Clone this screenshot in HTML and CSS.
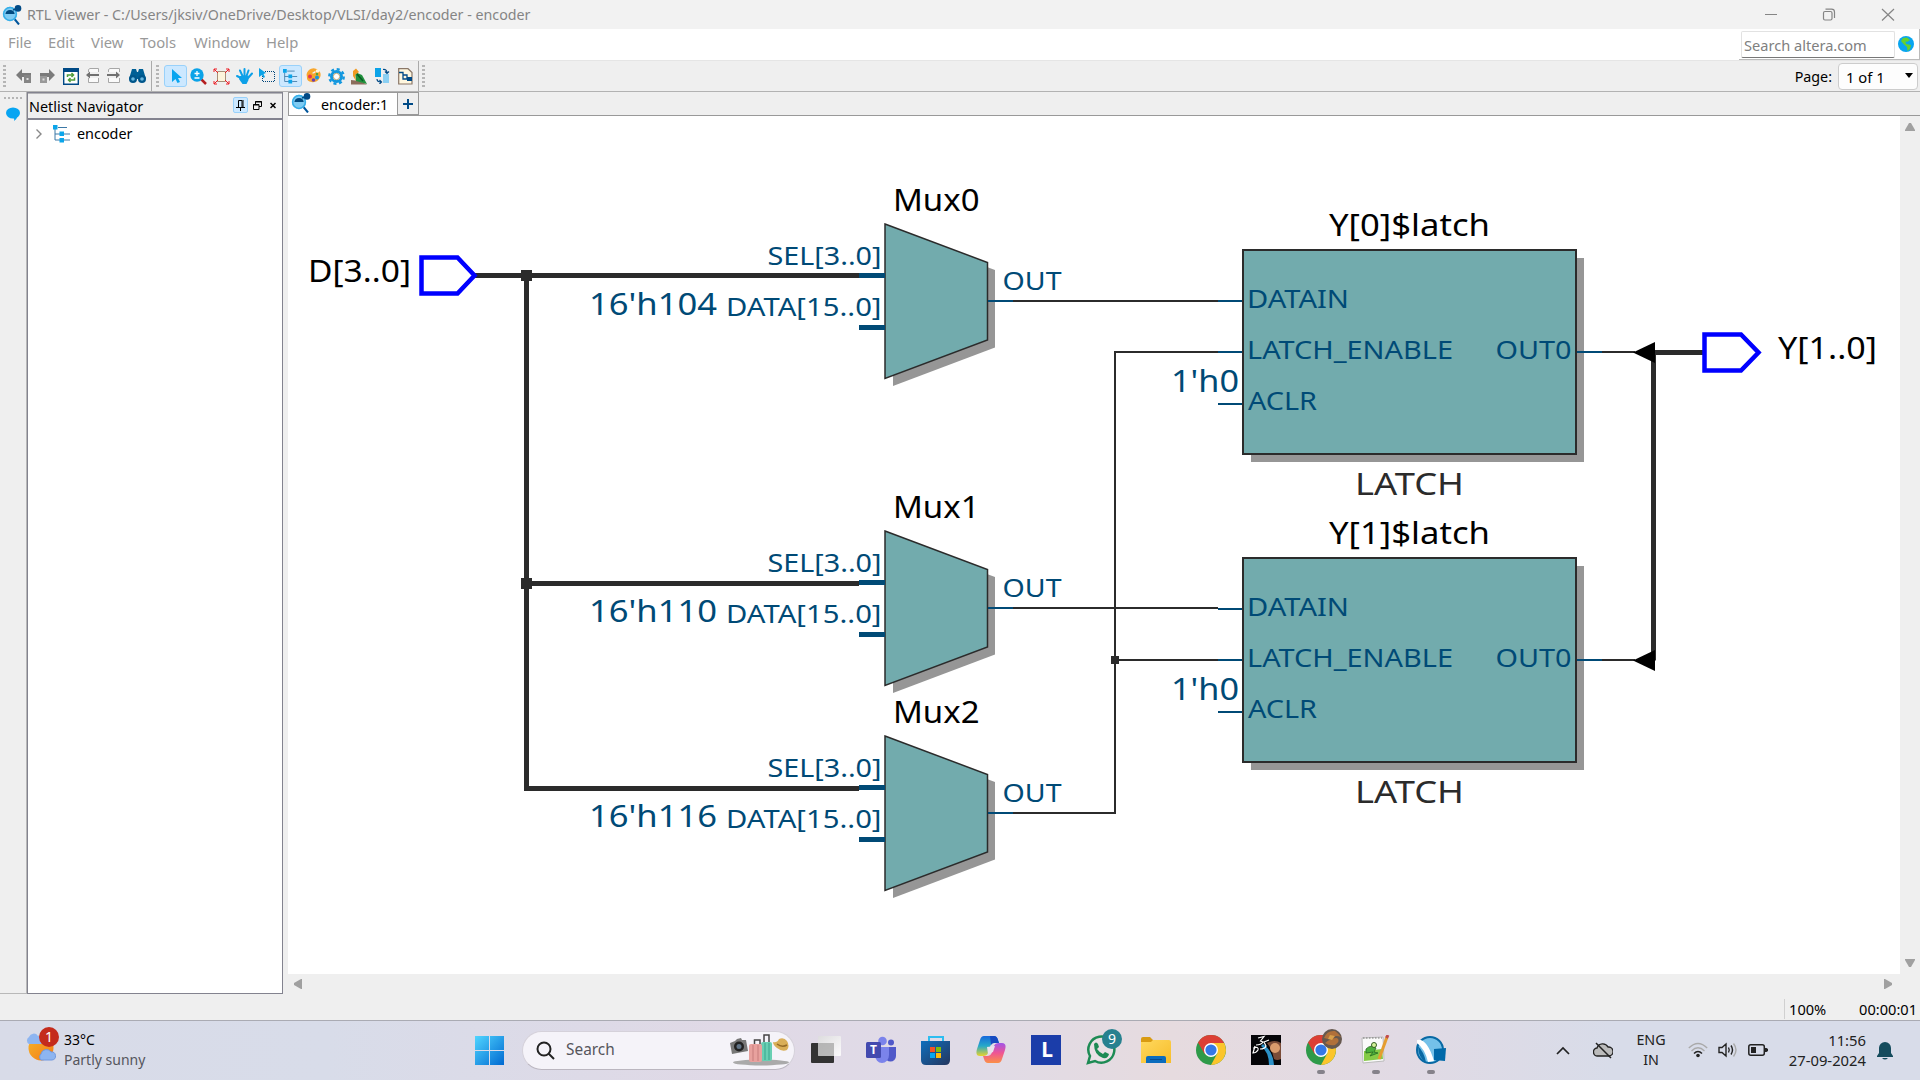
FILE: index.html
```
<!DOCTYPE html>
<html lang="en">
<head>
<meta charset="utf-8">
<title>RTL Viewer</title>
<link rel="stylesheet" href="styles.css">
</head>
<body>
<svg class="defs" width="0" height="0" aria-hidden="true">
  <defs>
    <symbol id="lens" viewBox="0 0 20 20">
      <path d="M12.500 14L17 19.500" stroke="#00559b" stroke-width="2"/>
      <circle cx="8" cy="9" r="7.200" fill="#7ecbf3"/><circle cx="8" cy="9" r="6.400" fill="none" stroke="#35aee8" stroke-width="1.500"/>
      <path d="M3.400 9A4.700 4.700 0 0 1 12.700 9Z" fill="#004a80"/>
      <path d="M11 5L16 3" stroke="#004a80" stroke-width="1.500"/><circle cx="16" cy="3.400" r="3.300" fill="#004a86"/>
    </symbol>
    <symbol id="tree" viewBox="0 0 18 18">
      <path d="M2 4V15H9M2 9H7M5 2.500H14M11 9H17M11 15H17" fill="none" stroke="#3c78a6" stroke-width="1"/>
      <path d="M0 0h4.500v4.500H0zM6.500 6.500H11V11H6.500zM6.500 13H11v4.500H6.500z" fill="#0ba5ea"/>
    </symbol>
    <symbol id="chrome" viewBox="0 0 30 30">
      <circle cx="15" cy="15" r="15" fill="#2e9a49"/>
      <path d="M15 15L2 7.500A15 15 0 0 1 28 7.500Z" fill="#dc3f35"/>
      <path d="M15 8H28.200A15 15 0 0 1 15 30L21.500 18Z" fill="#fbc52b"/>
      <path d="M2 7.500L8.500 18.700 15 15V7.500Z" fill="#dc3f35"/>
      <circle cx="15" cy="15" r="7" fill="#fff"/><circle cx="15" cy="15" r="5.600" fill="#3478e6"/>
    </symbol>
    <g id="mux">
      <path d="M893 232L995 270V347.500L893 386Z" fill="#969696"/>
      <path d="M885 224L987.500 262.500V340L885 378.500Z" fill="#72abad" stroke="#2b2b2b" stroke-width="1.500"/>
      <path d="M859 275.500H885M859 327.500H885" stroke="#004a76" stroke-width="5"/>
      <path d="M988 301H1013" stroke="#004a76" stroke-width="2"/>
    </g>
    <g id="latch">
      <path d="M1251 258H1584V462H1251Z" fill="#969696"/>
      <path d="M1243 250H1576V454H1243Z" fill="#72abad" stroke="#2b2b2b" stroke-width="2"/>
      <path d="M1218 301H1242M1218 352H1242M1218 404H1242M1577 352H1602" stroke="#004a76" stroke-width="2"/>
      <path d="M1602 352H1635" stroke="#2b2b2b" stroke-width="2"/>
      <path d="M1633 352.500L1655 342V363Z" fill="#000"/>
    </g>
    <linearGradient id="win" x2="1" y2="1"><stop stop-color="#50d5ff"/><stop offset="1" stop-color="#0069d1"/></linearGradient>
    <linearGradient id="sun" x2="1" y2="1"><stop stop-color="#f5b52a"/><stop offset="1" stop-color="#f47a16"/></linearGradient>
    <linearGradient id="store" x2="1" y2="1"><stop stop-color="#0f6fbd"/><stop offset="1" stop-color="#24365e"/></linearGradient>
    <linearGradient id="coA" x2="0" y2="1"><stop stop-color="#1769dc"/><stop offset=".5" stop-color="#27a9c9"/><stop offset="1" stop-color="#e9d32b"/></linearGradient>
    <linearGradient id="coB" x2="0" y2="1"><stop stop-color="#a055e8"/><stop offset=".5" stop-color="#ef5594"/><stop offset="1" stop-color="#fb9047"/></linearGradient>
    <linearGradient id="folder" x2="1" y2="1"><stop stop-color="#ffd85e"/><stop offset="1" stop-color="#f7bd2a"/></linearGradient>
    <linearGradient id="glass" x2="1" y2="1"><stop stop-color="#ddd"/><stop offset="1" stop-color="#fff"/></linearGradient>
  </defs>
</svg>

<div class="window">
  <header class="titlebar">
    <svg class="app-icon" width="20" height="20"><use href="#lens"/></svg>
    <span class="title">RTL Viewer - C:/Users/jksiv/OneDrive/Desktop/VLSI/day2/encoder - encoder</span>
    <svg class="win-controls" width="132" height="20" viewBox="0 0 132 20" fill="none" stroke="#858585" stroke-width="1.200">
      <path d="M1 9.500H13M118 4L130 15.500M130 4L118 15.500"/><rect x="59.500" y="6.500" width="8.500" height="8.500" rx="1.500"/><path d="M61.500 4.200H67.500Q70.500 4.200 70.500 7V13"/>
    </svg>
  </header>

  <nav class="menubar">
    <span class="m-file">File</span><span class="m-edit">Edit</span><span class="m-view">View</span><span class="m-tools">Tools</span><span class="m-window">Window</span><span class="m-help">Help</span>
    <div class="web-search">
      <div class="search-field">Search altera.com</div>
      <svg width="16" height="16" viewBox="0 0 16 16"><circle cx="8" cy="8" r="8" fill="#08a5ef"/><path d="M5 2L9 1.500 12 4 9 6 7.500 5 8 8 13 9 12 13 9.500 15 9 11 6 8.500 3 5Z" fill="#65d02e"/></svg>
    </div>
  </nav>

  <div class="toolbar">
    <div class="group nav-tools">
      <i class="grip"></i>
      <svg width="16" height="16" viewBox="0 0 16 16"><path d="M0 7L6 1V5H15V9H6V13Z" fill="#7b7b7b"/><path d="M8 7h7v8H8z" fill="#858585"/><path d="M10.500 10h2v2h-2z" fill="#ddd"/></svg>
      <svg width="16" height="16" viewBox="0 0 16 16"><path d="M15 7L9 1V5H0V9H9V13Z" fill="#7b7b7b"/><path d="M0 8h7v7H0z" fill="#999"/><path d="M2.500 10.500h2v2h-2z" fill="#ddd"/></svg>
      <svg width="16" height="17" viewBox="0 0 16 17"><path d="M.7.700H15.300V16.300H.7Z" fill="#fff" stroke="#004a86" stroke-width="1.400"/><path d="M0 0H16V4H0Z" fill="#004a86"/><path d="M4.500 9V7H10M8.500 5L10.500 7 8.500 9M11.500 9.500V12H6M7.500 10L5.500 12 7.500 14" fill="none" stroke="#4e9d3a" stroke-width="1.500"/></svg>
      <svg width="14" height="16" viewBox="0 0 14 16"><path d="M2.500 4V1.500L4 .500H12.500V4M2.500 10V14.500H12.500V10" fill="#fafafa" stroke="#a7a7a7"/><path d="M0 7L4 3.500V6H13V8H4V10.500Z" fill="#707070"/></svg>
      <svg width="14" height="16" viewBox="0 0 14 16"><path d="M1.500 4V1.500L3 .500H12.500V4M1.500 10V14.500H12.500V10" fill="#fafafa" stroke="#a7a7a7"/><path d="M13 7L9 3.500V6H0V8H9V10.500Z" fill="#707070"/></svg>
      <svg width="17" height="16" viewBox="0 0 17 16"><path d="M3 1H7L8 4H9L10 1H14L17 11H0Z" fill="#006096"/><circle cx="4" cy="11" r="4" fill="#00568b"/><circle cx="13" cy="11" r="4" fill="#00568b"/><circle cx="4" cy="11" r="1.800" fill="#69b7df"/><circle cx="13" cy="11" r="1.800" fill="#69b7df"/></svg>
    </div>
    <div class="group view-tools">
      <i class="grip"></i>
      <span class="tool on"><svg width="16" height="16" viewBox="0 0 16 16"><path d="M4 1L14 10H10L12 14 9.500 15 7.500 11 4 14Z" fill="#08a5ef"/></svg></span>
      <span class="tool"><svg width="17" height="17" viewBox="0 0 17 17"><path d="M11 11L16 16" stroke="#b51f20" stroke-width="2.500"/><circle cx="7" cy="7" r="6.700" fill="#0ba3e8"/><path d="M4.500 5.500H9.500M7 3V8M4.500 10H9.500" stroke="#fff" stroke-width="1.300"/></svg></span>
      <span class="tool"><svg width="17" height="17" viewBox="0 0 17 17"><path d="M4.500 3.500H12.500V13.500H4.500Z" fill="#fdf5dc" stroke="#a88f78"/><path d="M5 5L1 1M1 4V1H4M12 5L16 1M13 1H16V4M5 12L1 16M1 13V16H4M12 12L16 16M13 16H16V13" fill="none" stroke="#ec1c24"/></svg></span>
      <span class="tool"><svg width="17" height="17" viewBox="0 0 17 17"><path d="M1 8L5 10M4 2.500L6.500 8M8.500 1V8M12.500 2.500L10.500 8M16 5.500L12 10" stroke="#0ca0e8" stroke-width="2" stroke-linecap="round"/><path d="M4 8L12.500 7.500V12L10.500 16H6.500L3 11Z" fill="#0ca0e8"/></svg></span>
      <span class="tool"><svg width="17" height="16" viewBox="0 0 17 16"><path d="M6 3.500H15.500V13.500H3.500V8" fill="none" stroke="#00457a" stroke-dasharray="1 1"/><path d="M0 0L7 5 4.500 6 6 9 4.500 10 3 7 0 9Z" fill="#0ba3e8"/></svg></span>
      <span class="tool on"><svg width="15" height="15"><use href="#tree"/></svg></span>
      <span class="tool"><svg width="16" height="16" viewBox="0 0 16 16"><path d="M1 9A7 6.500 0 1 1 13 11C10 16 0 15 1 9ZM6 5A2 1.500 0 0 0 9 3Z" fill="#f8a62c"/><circle cx="11.500" cy="3" r="1.800" fill="#fff4dc"/><circle cx="4" cy="8.500" r="2" fill="#e8344e"/><circle cx="7.500" cy="12" r="1.800" fill="#6b3fb4"/><circle cx="11" cy="9.500" r="2" fill="#1598df"/><circle cx="11" cy="6" r="1.200" fill="#57a43a"/></svg></span>
      <span class="tool"><svg width="17" height="17" viewBox="0 0 17 17"><circle cx="8.500" cy="8.500" r="7.300" fill="none" stroke="#1398df" stroke-width="2.300" stroke-dasharray="3 2.730"/><circle cx="8.500" cy="8.500" r="5" fill="#fff" stroke="#1398df" stroke-width="3"/><circle cx="8.500" cy="8.500" r="3.200" fill="none" stroke="#bba778"/></svg></span>
      <span class="tool"><svg width="17" height="17" viewBox="0 0 17 17"><path d="M0 12L9 13 16 16.500H0Z" fill="#8b6d5b"/><path d="M4 4L11 7 16 16 5 13Z" fill="#20913c"/><path d="M2 3L5 .500 8 4 4 7 5 13 2 8Z" fill="#f09a23"/><path d="M6 6L12 13" stroke="#075d27" stroke-width="1.500"/></svg></span>
      <span class="tool"><svg width="15" height="16" viewBox="0 0 15 16"><path d="M0 0h6v9H0z" fill="#0ba3e8"/><path d="M8 6h6v9H8z" fill="#8bd0f3"/><path d="M8 1.500Q12 1 12 5M10 3.500L12 5.500 14 3.500M2 11Q2 14 6 14M4.500 12L6.500 14 4.500 16" fill="none" stroke="#004a86" stroke-width="1.200"/></svg></span>
      <span class="tool"><svg width="15" height="17" viewBox="0 0 15 17"><path d="M.7.700H10L14 4.500V16H.7Z" fill="#fff7df" stroke="#8a7768" stroke-width="1.200"/><path d="M1 4.500H5V11H10M5 7H9V11" fill="none" stroke="#004a86" stroke-width="1.300"/><path d="M9 9h5v4H9z" fill="#004a86"/></svg></span>
    </div>
    <div class="group rest"><i class="grip"></i>
      <div class="pager"><span>Page:</span><div class="combo"><span>1 of 1</span><svg width="8" height="5" viewBox="0 0 8 5"><path d="M0 0H8L4 5Z"/></svg></div></div>
    </div>
  </div>

  <main class="workspace">
    <aside class="rail"><i class="rail-grip"></i><svg width="14" height="14" viewBox="0 0 14 14"><ellipse cx="7" cy="6" rx="7" ry="5.500" fill="#08a5f2"/><path d="M7 10L12 8Q11 12 8 14Q9 12 7 10Z" fill="#08a5f2"/></svg></aside>
    <section class="navigator">
      <div class="nav-head"><span>Netlist Navigator</span>
        <i class="pin"><svg width="9" height="11" viewBox="0 0 9 11" fill="none" stroke="#000"><path d="M2.500 7V.500H6V7M7 0V7M0 7.500H9M4.500 8V11"/></svg></i>
        <svg class="float" width="9" height="9" viewBox="0 0 9 9" fill="none" stroke="#000"><path d="M2.500 3V.500H8.500V5.500H6M2 1H9M.500 3.500H6V8.500H.500ZM0 4H6"/></svg>
        <svg class="close" width="6" height="7" viewBox="0 0 6 7"><path d="M.500 1L5.500 6M5.500 1L.500 6" stroke="#000" stroke-width="1.500"/></svg>
      </div>
      <div class="tree-row"><svg width="6" height="10" viewBox="0 0 6 10"><path d="M.500.500L5 5 .500 9.500" fill="none" stroke="#888" stroke-width="1.400"/></svg><svg class="tree-icon" width="18" height="18"><use href="#tree"/></svg><span>encoder</span></div>
    </section>
    <section class="editor">
      <div class="tabs"><div class="tab"><svg width="20" height="20"><use href="#lens"/></svg><span>encoder:1</span></div><div class="add"><svg width="10" height="10" viewBox="0 0 10 10"><path d="M5 0V10M0 5H10" stroke="#004a86" stroke-width="2"/></svg></div></div>
      <div class="view">
        <svg class="schematic" width="1612" height="858" viewBox="288 116 1612 858">
          <g class="bus"><path d="M475 275.500H859M526.500 273V788.500H859M526.500 583.500H859M1653.500 352.500V660.500M1653 352.500H1703"/></g>
          <g class="wire"><path d="M1013 301H1218M1013 608H1218M1013 813H1115V352H1218M1115 660H1218"/></g>
          <path class="node" d="M521 270h11v11h-11zM521 578h11v11h-11zM1111 656h8v8h-8z"/>
          <path class="port" d="M421.500 257.500H457.500L474.500 275.500 457.500 293.500H421.500Z"/>
          <path class="port" d="M1704.500 334.500H1741L1758.500 352.500 1741 370.500H1704.500Z"/>
          <use href="#mux"/><use href="#mux" y="307"/><use href="#mux" y="512"/>
          <use href="#latch"/><use href="#latch" y="308"/>
          <g class="big">
            <text x="308" y="282" textLength="103" lengthAdjust="spacingAndGlyphs">D[3..0]</text><text x="1778" y="359" textLength="99" lengthAdjust="spacingAndGlyphs">Y[1..0]</text>
            <text x="893" y="210.500" textLength="86.500" lengthAdjust="spacingAndGlyphs">Mux0</text><text x="893" y="517.500" textLength="86.500" lengthAdjust="spacingAndGlyphs">Mux1</text><text x="893" y="722.500" textLength="86.500" lengthAdjust="spacingAndGlyphs">Mux2</text>
            <text x="1329" y="235.500" textLength="161" lengthAdjust="spacingAndGlyphs">Y[0]$latch</text><text x="1329" y="543.500" textLength="161" lengthAdjust="spacingAndGlyphs">Y[1]$latch</text>
          </g>
          <g class="big type"><text x="1355" y="494.500" textLength="109" lengthAdjust="spacingAndGlyphs">LATCH</text><text x="1355" y="802.500" textLength="109" lengthAdjust="spacingAndGlyphs">LATCH</text></g>
          <g class="big const">
            <text x="589" y="315" textLength="128" lengthAdjust="spacingAndGlyphs">16'h104</text><text x="589" y="622" textLength="128" lengthAdjust="spacingAndGlyphs">16'h110</text><text x="589" y="827" textLength="128" lengthAdjust="spacingAndGlyphs">16'h116</text>
            <text x="1171" y="392" textLength="68" lengthAdjust="spacingAndGlyphs">1'h0</text><text x="1171" y="700" textLength="68" lengthAdjust="spacingAndGlyphs">1'h0</text>
          </g>
          <g class="pin-name">
            <text x="767.500" y="265" textLength="114" lengthAdjust="spacingAndGlyphs">SEL[3..0]</text><text x="726" y="316" textLength="155.500" lengthAdjust="spacingAndGlyphs">DATA[15..0]</text><text x="1002.500" y="290" textLength="59" lengthAdjust="spacingAndGlyphs">OUT</text>
            <text x="767.500" y="572" textLength="114" lengthAdjust="spacingAndGlyphs">SEL[3..0]</text><text x="726" y="623" textLength="155.500" lengthAdjust="spacingAndGlyphs">DATA[15..0]</text><text x="1002.500" y="597" textLength="59" lengthAdjust="spacingAndGlyphs">OUT</text>
            <text x="767.500" y="777" textLength="114" lengthAdjust="spacingAndGlyphs">SEL[3..0]</text><text x="726" y="828" textLength="155.500" lengthAdjust="spacingAndGlyphs">DATA[15..0]</text><text x="1002.500" y="802" textLength="59" lengthAdjust="spacingAndGlyphs">OUT</text>
            <text x="1247" y="308" textLength="102" lengthAdjust="spacingAndGlyphs">DATAIN</text><text x="1247" y="359" textLength="206" lengthAdjust="spacingAndGlyphs">LATCH_ENABLE</text><text x="1248" y="410" textLength="69" lengthAdjust="spacingAndGlyphs">ACLR</text><text x="1495.500" y="359" textLength="76" lengthAdjust="spacingAndGlyphs">OUT0</text>
            <text x="1247" y="616" textLength="102" lengthAdjust="spacingAndGlyphs">DATAIN</text><text x="1247" y="667" textLength="206" lengthAdjust="spacingAndGlyphs">LATCH_ENABLE</text><text x="1248" y="718" textLength="69" lengthAdjust="spacingAndGlyphs">ACLR</text><text x="1495.500" y="667" textLength="76" lengthAdjust="spacingAndGlyphs">OUT0</text>
          </g>
        </svg>
        <div class="vscroll"><svg width="10" height="8" viewBox="0 0 10 8"><path d="M4 0H6L10 7V8H0V7Z"/></svg><svg width="10" height="8" viewBox="0 0 10 8"><path d="M4 8H6L10 1V0H0V1Z"/></svg></div>
        <div class="hscroll"><svg width="8" height="10" viewBox="0 0 8 10"><path d="M0 4V6L7 10H8V0H7Z"/></svg><svg width="8" height="10" viewBox="0 0 8 10"><path d="M8 4V6L1 10H0V0H1Z"/></svg></div>
      </div>
    </section>
  </main>
  <footer class="status"><span class="zoom">100%</span><span>00:00:01</span></footer>
</div>

<div class="taskbar">
  <div class="weather">
    <svg width="36" height="40" viewBox="0 0 36 40"><circle cx="16" cy="22" r="12.500" fill="url(#sun)"/><path d="M4 18A4 4 0 0 1 4 11A5 5 0 0 1 13 10A4 4 0 0 1 16 18Z" fill="#8db5f1"/><path d="M16 34A4 4 0 0 1 16 28A5.500 5.500 0 0 1 26 26A4 4 0 0 1 27 34Z" fill="#8db5f1" stroke="#7198df"/><circle cx="24" cy="11" r="10" fill="#c42b1c"/><text class="badge" x="24" y="16">1</text></svg>
    <div><div>33°C</div><div class="sub">Partly sunny</div></div>
  </div>
  <svg class="start" width="29" height="29" viewBox="0 0 29 29" fill="url(#win)"><path d="M0 0H14V14H0ZM15 0H29V14H15ZM0 15H14V29H0ZM15 15H29V29H15Z"/></svg>
  <div class="search">
    <svg width="19" height="19" viewBox="0 0 19 19" fill="none" stroke="#222" stroke-width="2"><circle cx="8" cy="8" r="6.500"/><path d="M12.500 12.500L18 18"/></svg>
    <span>Search</span>
    <svg class="travel" width="60" height="32" viewBox="0 0 60 32"><ellipse cx="31" cy="28.500" rx="28" ry="3" fill="#aaa"/><path d="M0 9L5 7 7 5 11 4 12 6 16 6 18 17 2 20Z" fill="#777"/><circle cx="9" cy="12.500" r="5" fill="#222"/><circle cx="9" cy="12.500" r="2.500" fill="#607386"/><path d="M34 8V1H39V8M24.500 10V6H30V10" fill="none" stroke="#444" stroke-width="1.500"/><rect x="31" y="8" width="11" height="19" rx="2" fill="#69cfb3"/><path d="M35 9V26M39 9V26" stroke="#3aa58d"/><rect x="19" y="10" width="13" height="18" rx="2" fill="#e8a19e"/><path d="M23 11V27M28 11V27" stroke="#c77d7c"/><path d="M43 8Q47 9 49 5Q54 3 57 7Q60 12 57 16Q52 18 47 14Q43 11 43 8Z" fill="#d9ae57"/><path d="M47 10Q52 14 57 11" fill="none" stroke="#956b26" stroke-width="1.500"/></svg>
  </div>
  <div class="apps">
    <span class="app"><svg width="30" height="30" viewBox="0 0 30 30"><rect y="8" width="23" height="20" rx="1" fill="#333"/><rect x="7" y="1" width="23" height="20" rx="1" fill="url(#glass)" opacity=".88"/><path d="M7 8h16v13H7z" fill="#aaa" opacity=".7"/></svg></span>
    <span class="app"><svg width="30" height="30" viewBox="0 0 30 30"><circle cx="25" cy="7.500" r="3" fill="#5059c9"/><path d="M19 12H30V21A5.500 5.500 0 0 1 19 21Z" fill="#5059c9"/><circle cx="16.500" cy="6" r="4.300" fill="#7b83eb"/><path d="M9 12H23V20A7 8 0 0 1 9 20Z" fill="#7b83eb"/><rect y="7" width="15" height="16" rx="1.500" fill="#434aaf"/><text class="t-logo" x="7.500" y="19">T</text></svg></span>
    <span class="app"><svg width="30" height="30" viewBox="0 0 30 30"><path d="M8 7V2H22V7" fill="none" stroke="#2dbdf0" stroke-width="2"/><path d="M0 6H29V25Q29 30 24 30H5Q0 30 0 25Z" fill="url(#store)"/><path d="M9 12h5v5H9z" fill="#f35325"/><path d="M15 12h5v5h-5z" fill="#81bc06"/><path d="M9 18h5v5H9z" fill="#05a6f0"/><path d="M15 18h5v5h-5z" fill="#ffba08"/></svg></span>
    <span class="app"><svg width="30" height="30" viewBox="0 0 30 30"><path d="M8 1H18Q21 1 22 5L23 8H18Q15 8 14 12L12 18Q11 21 7 21H4Q-1 21 1 14L4 5Q5 1 8 1Z" fill="url(#coA)"/><path d="M22 28H12Q9 28 8 24L7 21H11Q15 21 16 17L18 11Q19 8 23 8H26Q31 8 29 15L26 24Q25 28 22 28Z" fill="url(#coB)"/><path d="M14 1H18Q21 1 22 5L23 8H18Q16 8 15 10Z" fill="#174ac0"/><path d="M11 12L19 11 17 17 12 19Z" fill="#e9e3ed"/></svg></span>
    <span class="app"><svg class="l-icon" width="30" height="30" viewBox="0 0 30 30"><path d="M0 0H30V30H0Z" fill="#1b3da9"/><text class="l-logo" x="16" y="22">L</text></svg></span>
    <span class="app"><svg class="spill" width="36" height="38" viewBox="0 -7 36 38"><path d="M2 28L4 21A13 13 0 1 1 9 26Z" fill="#e9e1e5" stroke="#1d8b54" stroke-width="2.500"/><path d="M8 9Q10 6 12 9L13 12 11 14Q14 18 17 19L19 17 23 19Q22 24 17 23Q8 20 8 9Z" fill="#1d8b54"/><circle cx="26" cy="4" r="10" fill="#27818f"/><text class="badge" x="26" y="9">9</text></svg></span>
    <span class="app"><svg width="30" height="30" viewBox="0 0 30 30"><path d="M0 4Q0 2 2 2H9L12 5H28V10H0Z" fill="#d99b12"/><path d="M0 7H10L12 5H28Q30 5 30 7V28H0Z" fill="url(#folder)"/><path d="M5 28V23Q5 21 7 21H23Q25 21 25 23V28Z" fill="#0b6cbd"/><path d="M9 24.500H21" stroke="#084b8e"/></svg></span>
    <span class="app"><svg width="30" height="30"><use href="#chrome"/></svg></span>
    <span class="app"><svg width="30" height="30" viewBox="0 0 30 30"><path d="M0 0H30V30H0Z" fill="#050508"/><path d="M16 8Q24 4 30 8V24Q26 26 23 24Q21 14 16 8Z" fill="#7a4c38"/><circle cx="24" cy="13" r="5" fill="#d99b6c"/><path d="M12 9Q22 16 23 30H18Q18 17 10 11Z" fill="#2c91c8"/><path d="M7 3L13 1.500 9.500 6 12 7Q10 10 5 10M2 13Q8 11 7 15Q5 18 2 18L4 11M18 5L13 7 15 11Q14 14 9 14" fill="none" stroke="#fff" stroke-width="1.200"/></svg></span>
    <span class="app running"><svg class="spill" width="36" height="38" viewBox="0 -7 36 38"><use href="#chrome" width="30" height="30"/><circle cx="26" cy="4" r="10" fill="#66584e"/><path d="M18 3Q21-5 29-4Q33-1 35 2Q29-1 22 4ZM19 8Q25 3 31 3Q35 6 29 10Q23 11 19 8Z" fill="#b0703a"/><path d="M24 0L29 1 26 5 22 4Z" fill="#d9a04b"/></svg></span>
    <span class="app running"><svg width="30" height="30" viewBox="0 0 30 30"><path d="M1 3L22 2 23 26 2 28Z" fill="#fafafa" stroke="#bbb"/><path d="M3 16L21 14 22 24 3 26Z" fill="#85cb46"/><path d="M5 14Q10 9 15 13L13 17 17 18 9 21 12 17 5 18Z" fill="#4caf3d" stroke="#246b21" stroke-width=".8"/><circle cx="13" cy="10" r="2.500" fill="#d4f29a" stroke="#325e20"/><path d="M26 2L18 24" stroke="#e59d2f" stroke-width="3"/><path d="M25.500 3L27 0" stroke="#c14b4b" stroke-width="3"/><path d="M2 3H21" stroke="#777" stroke-dasharray="1.500 1.500"/></svg></span>
    <span class="app running"><svg width="30" height="30" viewBox="0 0 30 30"><circle cx="14" cy="15" r="13" fill="#74c1e9" stroke="#0869a4" stroke-width="2"/><path d="M1 5Q11 3 18 26L12 27Q9 14 1 8Z" fill="#fff"/><path d="M2 11Q8 17 10 27Q2 23 2 11Z" fill="#0869a4"/><path d="M18 14L30 13 29 26 18 25Z" fill="#0069a9"/></svg></span>
  </div>
  <div class="tray">
    <svg class="caret" width="14" height="9" viewBox="0 0 14 9"><path d="M1 8L7 2 13 8" fill="none" stroke="#222" stroke-width="1.700"/></svg>
    <svg class="cloud" width="20" height="18" viewBox="0 0 20 18"><path d="M5 15A4 4 0 0 1 4 7A6 6 0 0 1 15 6A4.500 4.500 0 0 1 16 15Z" fill="#bbb" stroke="#222" stroke-width="1.400"/><path d="M3 2L18 17" stroke="#222" stroke-width="1.500"/></svg>
    <div class="lang"><div>ENG</div><div>IN</div></div>
    <svg class="wifi" width="20" height="16" viewBox="0 0 20 16" fill="none"><path d="M.800 6Q10-3 19.200 6M3.500 9Q10 2.500 16.500 9" stroke="#aaa" stroke-width="1.300"/><path d="M6 11.500Q10 7.500 14 11.500" stroke="#222" stroke-width="1.500"/><circle cx="10" cy="13.500" r="1.800" fill="#222"/></svg>
    <svg class="sound" width="20" height="16" viewBox="0 0 20 16" fill="none" stroke="#222" stroke-width="1.400"><path d="M1 5.500H4L8 2V14L4 10.500H1ZM10.500 5.500Q12 8 10.500 10.500M13 3.500Q16 8 13 12.500"/><path d="M15.500 1.500Q20.500 8 15.500 14.500" stroke="#aaa"/></svg>
    <svg class="battery" width="20" height="12" viewBox="0 0 20 12"><rect x=".8" y=".8" width="15.500" height="10.400" rx="2" fill="none" stroke="#222" stroke-width="1.500"/><path d="M3 3H8V9H3ZM17 4H18.500L20 5V7L18.500 8H17Z" fill="#222"/></svg>
    <div class="clock"><div>11:56</div><div>27-09-2024</div></div>
    <svg class="bell" width="16" height="19" viewBox="0 0 16 19" fill="#154c5d"><path d="M2 7A6 6 0 0 1 14 7V12L16 15V16H0V15L2 12ZM5 17H11Q8 20 5 17Z"/></svg>
  </div>
</div>
</body>
</html>
```
FILE: styles.css
```
* { box-sizing: border-box; }
body { margin: 0; width: 1920px; height: 1080px; overflow: hidden; display: flex; flex-direction: column; background: #efefef; color: #000; font: 15px/20px "Noto Sans", sans-serif; }
svg { display: block; flex: none; }
.defs { position: absolute; }
.window { height: 1020px; display: flex; flex-direction: column; }

.titlebar { height: 29px; background: #f2f2f2; display: flex; align-items: center; padding: 0 20px 0 2px; color: #858585; }
.title { margin-left: 5px; font-size: 14.26px; white-space: nowrap; }
.win-controls { margin-left: auto; margin-right: 4px; }

.menubar { height: 32px; background: #fff; border-bottom: 1px solid #e5e5e5; display: flex; align-items: center; padding-left: 8px; color: #999; font-size: 14.8px; }
.menubar span { white-space: nowrap; padding-bottom: 5px; }
.m-file { width: 40px; }
.m-edit { width: 43px; }
.m-view { width: 49px; }
.m-tools { width: 54px; }
.m-window { width: 72px; }
.web-search { margin-left: auto; display: flex; align-items: center; gap: 3px; width: 181px; height: 31px; padding: 0 0 0 2px; border-bottom: 1px solid #bbb; border-right: 1px solid #bbb; }
.search-field { width: 154px; height: 27px; border: 1px solid #e2e2e2; border-bottom: 1px solid #777; border-radius: 2px; padding: 3px 0 0 2px; color: #808080; font-size: 14.6px; white-space: nowrap; }

.toolbar { height: 31px; display: flex; border-bottom: 1px solid #b2b2b2; }
.group { display: flex; align-items: center; height: 30px; border-right: 1px solid #aaa; }
.grip { width: 3px; height: 23px; flex: none; background: repeating-linear-gradient(#b5b5b5 0 2px, transparent 2px 4px); }
.nav-tools { width: 152px; padding-left: 3px; gap: 7.3px; }
.nav-tools .grip { margin-right: 3px; }
.view-tools { width: 267px; padding-left: 4px; }
.view-tools .grip { margin-right: 5px; }
.tool { width: 23px; height: 22px; flex: none; display: grid; place-items: center; }
.tool.on { background: #cce8ff; border: 1px solid #99d1fa; border-radius: 3px; }
.rest { flex: 1; border: 0; padding-left: 3px; }
.pager { margin-left: auto; margin-right: 2px; display: flex; align-items: center; gap: 6px; font-size: 14.3px; }
.pager span { padding-top: 2px; }
.combo { width: 80px; height: 27px; border: 1px solid #ccc; border-radius: 4px; background: #fdfdfd; display: flex; align-items: center; justify-content: space-between; padding: 0 4px 0 7px; white-space: nowrap; font-size: 14.8px; }
.combo svg { margin-top: -2px; }

.workspace { flex: 1; display: flex; min-height: 0; }
.rail { width: 27px; height: 902px; border-right: 1px solid #b8b8b8; border-bottom: 1px solid #b8b8b8; padding: 5px 0 0 4px; }
.rail-grip { display: block; width: 18px; height: 2px; margin-bottom: 8px; background: repeating-linear-gradient(90deg, #b5b5b5 0 2px, transparent 2px 4px); }
.rail svg { margin-left: 2px; }
.navigator { width: 256px; height: 902px; background: #fff; border: 1px solid #83838f; }
.nav-head { height: 27px; background: #efefef; border-top: 1px solid #b5b5b8; border-bottom: 2px solid #83838f; display: flex; align-items: center; padding-left: 1px; font-size: 14.4px; white-space: nowrap; }
.nav-head span { padding-top: 2px; }
.pin { width: 15px; height: 16px; margin: -2px 5px 0 auto; display: grid; place-items: center; background: #cce8ff; border: 1px solid #99d1fa; border-radius: 2px; }
.float { margin-right: 8px; margin-top: -2px; }
.close { margin-right: 6px; margin-top: -1px; }
.tree-row { display: flex; align-items: center; padding: 3px 0 0 8px; }
.tree-icon { margin-left: 11px; }
.tree-row span { margin-left: 6px; padding-top: 1px; font-size: 14.4px; }
.editor { margin-left: 5px; flex: 1; min-width: 0; display: flex; flex-direction: column; }
.tabs { height: 24px; display: flex; border-bottom: 1px solid #999; }
.tab { width: 110px; height: 23px; background: #fff; border: 1px solid #999; border-width: 1px 1px 0; display: flex; align-items: center; padding-left: 2px; font-size: 14.3px; white-space: nowrap; }
.tab svg { margin-top: -3px; }
.tab span { margin-left: 10px; padding-top: 1px; }
.add { width: 21px; border: 1px solid #999; border-left: 0; display: grid; place-items: center; }
.view { display: grid; grid-template: 858px 20px / 1612px 20px; }
.schematic { background: #fff; }
.vscroll { display: flex; flex-direction: column; justify-content: space-between; align-items: center; padding: 7px 0; fill: #a0a0a0; }
.hscroll { display: flex; justify-content: space-between; align-items: center; padding: 0 8px 0 6px; fill: #a0a0a0; }

.bus { fill: none; stroke: #2b2b2b; stroke-width: 5px; }
.wire { fill: none; stroke: #2b2b2b; stroke-width: 2px; }
.node { fill: #2b2b2b; }
.port { fill: #fff; stroke: #00f; stroke-width: 4.5px; }
.big { font-size: 31.5px; }
.type { fill: #2b2b2b; }
.const { fill: #004a76; }
.pin-name { font-size: 26px; fill: #004a76; }

.status { height: 26px; display: flex; justify-content: flex-end; align-items: center; gap: 26px; padding: 3px 3px 0 0; font-size: 14.6px; }
.status .zoom { border-left: 1px solid #d0d0d0; padding-left: 4px; width: 49px; }

.taskbar { height: 60px; border-top: 1px solid #aaabb3; display: flex; align-items: center; background: linear-gradient(90deg, #d8dbe8 0%, #d8dce9 17%, #e0d9e6 38%, #e0dbe7 50%, #e6dbdf 61%, #e1dae4 73%, #d8dce9 84%, #d8dce9 100%); }
.weather { width: 475px; padding: 0 0 2px 25px; display: flex; align-items: center; gap: 3px; font-size: 14px; }
.weather svg { margin-top: -8px; }
.sub { color: #55565d; }
.start { margin: 0 18px 0 0; }
.search { width: 273px; height: 39px; margin-bottom: 1px; border-radius: 20px; background: #f5f3f9; border: 1px solid #d5d1da; border-bottom-color: #bbb6c0; display: flex; align-items: center; padding-left: 13px; color: #55555c; font-size: 15.4px; }
.search span { margin-left: 11px; }
.travel { margin-left: auto; margin-right: 4px; }
.apps { width: 660px; margin-left: 16px; height: 59px; display: grid; grid-template-columns: repeat(12, 55px); }
.app { position: relative; padding-top: 14px; }
.spill { margin-top: -7px; }
.l-icon { overflow: visible; }
.running::after { content: ""; position: absolute; left: 11px; top: 49px; width: 8px; height: 4px; border-radius: 2px; background: #85828a; }
.badge { font-size: 14px; fill: #fff; text-anchor: middle; }
.t-logo { font-size: 12px; font-weight: 700; fill: #fff; text-anchor: middle; }
.l-logo { font-size: 21px; font-weight: 700; fill: #fff; text-anchor: middle; }
.tray { flex: 1; display: flex; align-items: center; color: #222; font-size: 14.3px; white-space: nowrap; padding-bottom: 1px; }
.caret { margin-left: 85px; }
.cloud { margin-left: 23px; }
.lang { width: 40px; margin-left: 18px; text-align: center; }
.wifi { margin-left: 17px; }
.sound { margin-left: 10px; }
.battery { margin-left: 10px; }
.clock { width: 90px; margin-left: 8px; text-align: right; font-size: 14.8px; }
.bell { margin-left: 11px; }
```
